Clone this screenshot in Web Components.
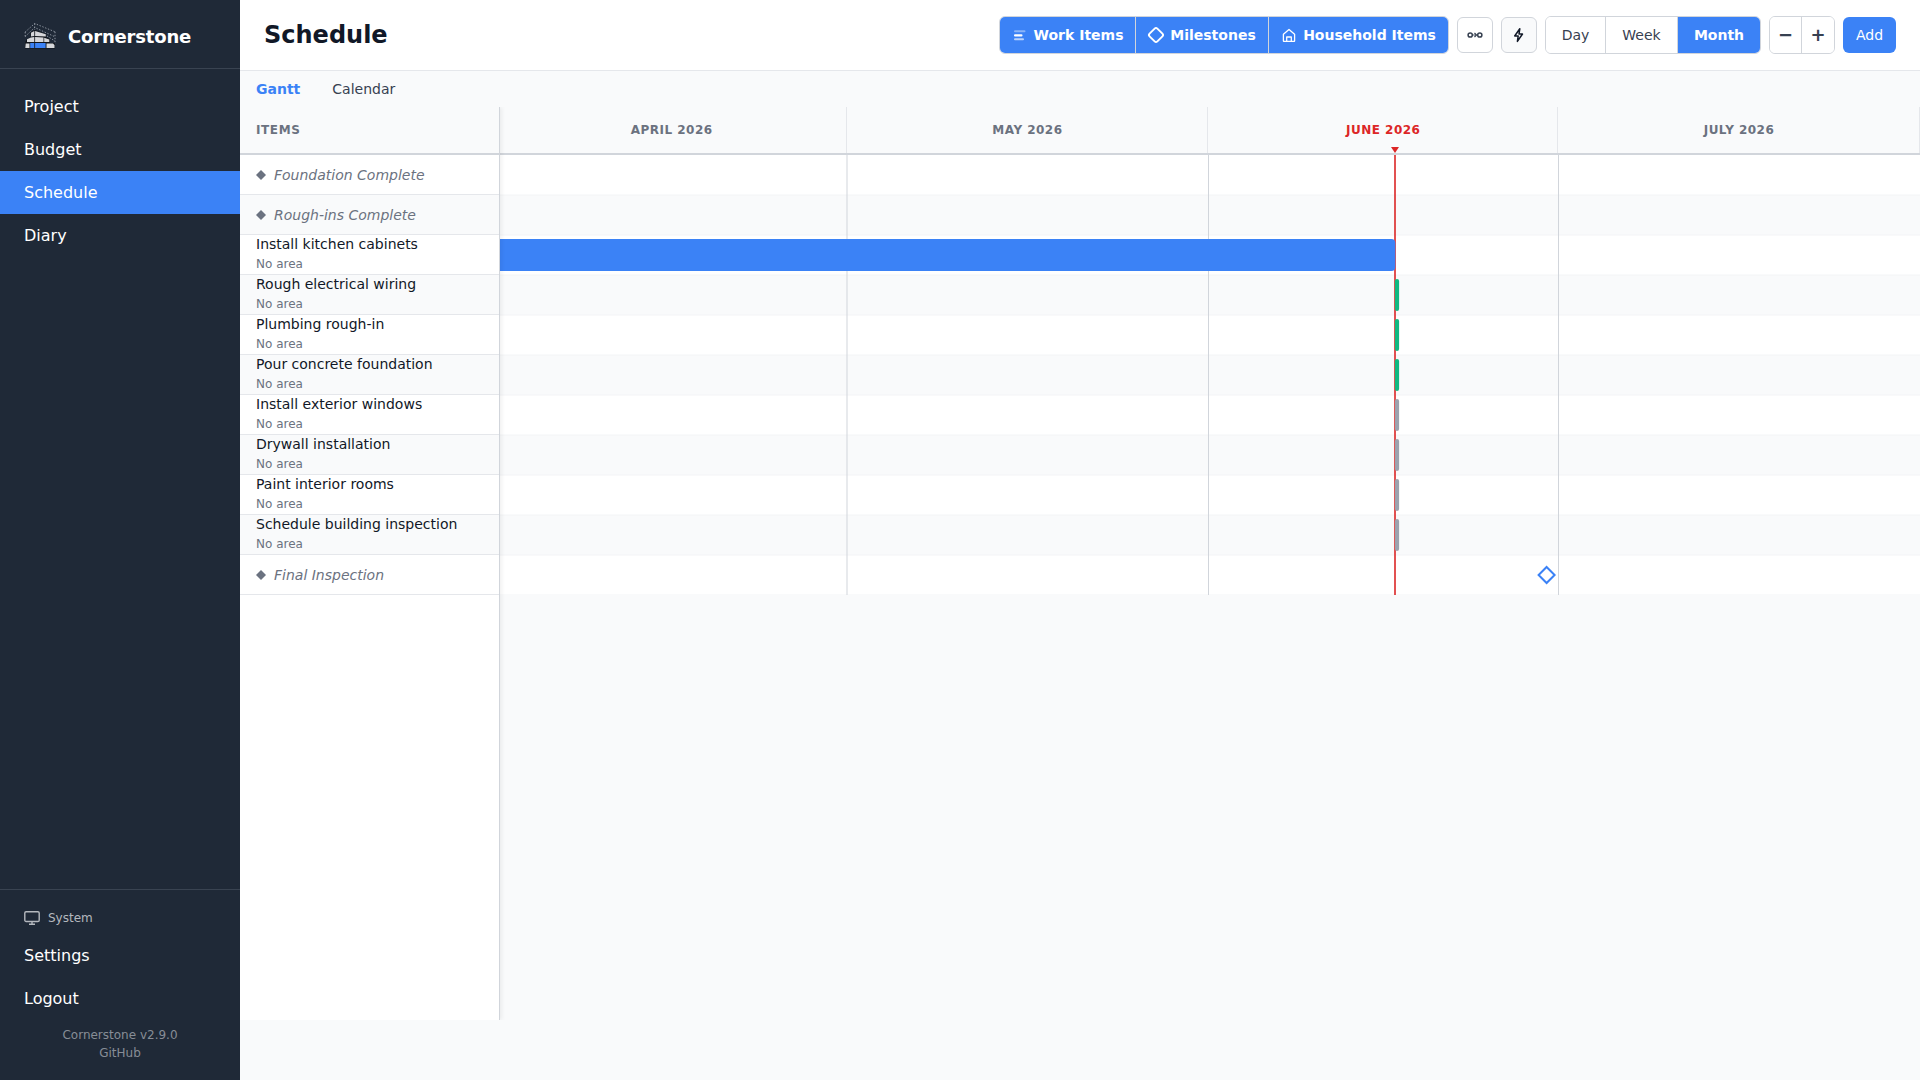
<!DOCTYPE html>
<html lang="en">
<head>
<meta charset="utf-8">
<title>Cornerstone - Schedule</title>
<style>
  html, body {
    margin: 0;
    height: 100%;
    background: #f9fafb;
    color: #111827;
    font-family: "DejaVu Sans", sans-serif;
    font-size: 14px;
    overflow: hidden;
  }
</style>
</head>
<body>
<schedule-app></schedule-app>

<script>
const DAY_WIDTH = 11.665;
const ROW_HEIGHT = 40;
const CHART_WIDTH = 1420;
// Left edge of April inside the visible part of the chart
const CHART_OFFSET = -3.3;
const TODAY_X = 895;

const MONTHS = [
  { label: 'April 2026', days: 30 },
  { label: 'May 2026', days: 31 },
  { label: 'June 2026', days: 30, current: true },
  { label: 'July 2026', days: 31 }
];

const ROWS = [
  { title: 'Foundation Complete', milestone: true },
  { title: 'Rough-ins Complete', milestone: true },
  { title: 'Install kitchen cabinets', start: -20, end: 895.3, color: '#3b82f6' },
  { title: 'Rough electrical wiring', start: 894.9, end: 899.1, color: '#10b981' },
  { title: 'Plumbing rough-in', start: 894.9, end: 899.1, color: '#10b981' },
  { title: 'Pour concrete foundation', start: 894.9, end: 899.1, color: '#10b981' },
  { title: 'Install exterior windows', start: 894.9, end: 899.1, color: '#9ca3af' },
  { title: 'Drywall installation', start: 894.9, end: 899.1, color: '#9ca3af' },
  { title: 'Paint interior rooms', start: 894.9, end: 899.1, color: '#9ca3af' },
  { title: 'Schedule building inspection', start: 894.9, end: 899.1, color: '#9ca3af' },
  { title: 'Final Inspection', milestone: true, at: 1046.6 }
];

const ICONS = {
  lines: `<svg width="20" height="20" viewBox="0 0 20 20" fill="currentColor">
    <rect x="4" y="5.3" width="11.5" height="2" rx="1" opacity=".4"/>
    <rect x="4" y="9.2" width="8.5" height="2.2" rx="1"/>
    <rect x="4" y="13.3" width="10" height="2" rx="1" opacity=".65"/></svg>`,
  diamond: `<svg width="20" height="20" viewBox="0 0 20 20" fill="none" stroke="currentColor" stroke-width="1.9">
    <rect x="4.5" y="4.5" width="11" height="11" rx="1.9" transform="rotate(45 10 10)"/></svg>`,
  house: `<svg width="20" height="20" viewBox="0 0 20 20" fill="none" stroke="currentColor" stroke-width="1.3" stroke-linejoin="round">
    <path d="M4.4 9.2 10 4.4l5.6 4.8v6.6a.6.6 0 0 1-.6.6H5a.6.6 0 0 1-.6-.6z"/>
    <path d="M7.7 16.4v-4.4h4.6v4.4"/></svg>`,
  link: `<svg width="20" height="20" viewBox="0 0 20 20" fill="none" stroke="currentColor" stroke-width="1.5">
    <circle cx="5.2" cy="10" r="2.1"/><circle cx="14.8" cy="10" r="2.1"/>
    <path d="M7.3 10h4" stroke-width=".9"/>
    <path d="M9.5 8l2 2-2 2" stroke-width="1.2"/></svg>`,
  bolt: `<svg width="20" height="20" viewBox="0 0 20 20" fill="none" stroke="currentColor" stroke-width="1.5" stroke-linejoin="round">
    <path d="M10.8 3.8 5.7 11h3.5l-.8 5.4L13.5 9H10z"/></svg>`,
  monitor: `<svg width="16" height="16" viewBox="0 0 16 16" fill="none" stroke="currentColor" stroke-width="1.4">
    <rect x=".8" y="1.8" width="14.4" height="9.7" rx="1.3"/>
    <path d="M8 11.5v2.7M5 14.3h6"/></svg>`,
  logo: `<svg width="32" height="32" viewBox="0 0 32 32">
    <g fill="none" stroke="#a9b0ba" stroke-width=".8" stroke-dasharray="1.4 1.6">
      <path d="M1.2 12 10.7 3.5 31 11.8"/>
      <path d="M1.2 16.5 10.7 7.5 31 16.8"/>
      <path d="M23 16 31 21"/>
      <path d="M10.7 3.5V10M31 11.8V24M1.2 12v6"/>
    </g>
    <path d="M6.5 12.5 10.7 10 22 14v3l4 2.5v3.5h5v5.5H1V23l1.5-3.5L6.5 17z" fill="#11151b"/>
    <g fill="#d6d7da">
      <path d="M7 12.7 10.3 11v5L7 16.5z"/>
      <path d="M11.1 11 21.800 14.3V16.6L11.1 16z"/>
      <path d="M3 19.2 6.8 17.4 10.3 17v5H3zM11.1 17 19.5 17.5V22H11.1zM20.2 17.7 25.3 19.5V22H20.2z"/>
      <path d="M1.7 23.5H5.5V28H1.3zM22.5 23.5H29l1.5 1.5v3h-8z"/>
    </g>
    <path d="M6.2 23h4.1v5H6.2zM11.1 23h10.5v5H11.1z" fill="#3b82f6"/></svg>`
};

class AppIcon extends HTMLElement {
  connectedCallback() {
    this.attachShadow({ mode: 'open' }).innerHTML = `
      <style>
        :host { display: inline-flex; flex: none; }
        svg { display: block; }
      </style>
      ${ICONS[this.getAttribute('name')]}
    `;
  }
}
customElements.define('app-icon', AppIcon);

class NavItem extends HTMLElement {
  connectedCallback() {
    this.attachShadow({ mode: 'open' }).innerHTML = `
      <style>
        :host {
          display: flex;
          align-items: center;
          height: 43px;
          padding-left: 24px;
          font-size: 16px;
          color: #fff;
        }
        :host([active]) { background: #3b82f6; }
      </style>
      <slot></slot>
    `;
  }
}
customElements.define('nav-item', NavItem);

class AppSidebar extends HTMLElement {
  connectedCallback() {
    this.attachShadow({ mode: 'open' }).innerHTML = `
      <style>
        :host {
          display: flex;
          flex-direction: column;
          width: 240px;
          flex: none;
          background: #1f2937;
          color: #fff;
        }
        .brand {
          display: flex;
          align-items: center;
          gap: 12px;
          height: 68px;
          padding: 4px 24px 0;
          box-sizing: border-box;
          font-size: 18px;
          font-weight: bold;
          letter-spacing: -.18px;
        }
        .rule { height: 1px; background: #394351; }
        nav { flex: 1; padding-top: 16px; }
        .section {
          display: flex;
          align-items: center;
          gap: 8px;
          height: 44px;
          padding: 6px 0 0 24px;
          margin-bottom: -6px;
          font-size: 12px;
          color: #b4b8be;
        }
        .footer {
          height: 60px;
          box-sizing: border-box;
          padding-top: 6px;
          font-size: 12px;
          line-height: 18px;
          text-align: center;
          color: #878d96;
        }
      </style>
      <div class="brand"><app-icon name="logo"></app-icon><span>Cornerstone</span></div>
      <div class="rule"></div>
      <nav>
        <nav-item>Project</nav-item>
        <nav-item>Budget</nav-item>
        <nav-item active>Schedule</nav-item>
        <nav-item>Diary</nav-item>
      </nav>
      <div class="rule"></div>
      <div class="section"><app-icon name="monitor"></app-icon><span>System</span></div>
      <nav-item>Settings</nav-item>
      <nav-item>Logout</nav-item>
      <div class="footer">
        <div>Cornerstone v2.9.0</div>
        <div>GitHub</div>
      </div>
    `;
  }
}
customElements.define('app-sidebar', AppSidebar);

class ButtonGroup extends HTMLElement {
  connectedCallback() {
    this.attachShadow({ mode: 'open' }).innerHTML = `
      <style>
        :host {
          display: flex;
          box-sizing: border-box;
          height: 38px;
          border: 1px solid #d1d5db;
          border-radius: 6px;
          overflow: hidden;
        }
        ::slotted(*:not(:last-child)) { border-right: 1px solid #d1d5db; }
      </style>
      <slot></slot>
    `;
  }
}
customElements.define('button-group', ButtonGroup);

class ToolButton extends HTMLElement {
  connectedCallback() {
    const width = this.getAttribute('width');
    this.attachShadow({ mode: 'open' }).innerHTML = `
      <style>
        :host {
          display: flex;
          align-items: center;
          justify-content: center;
          gap: 4px;
          box-sizing: border-box;
          width: ${width}px;
          color: #374151;
          background: #fff;
          white-space: nowrap;
        }
        :host([active]) {
          background: #3b82f6;
          color: #fff;
          font-weight: bold;
        }
        :host([filter]) { padding-right: 2px; }
        :host([boxed]) {
          height: 36px;
          border: 1px solid #d1d5db;
          border-radius: 6px;
        }
        :host([muted]) { background: #f9fafb; color: #111827; }
        :host([primary]) {
          height: 36px;
          border-radius: 6px;
          background: #3b82f6;
          color: #fff;
        }
        :host([sign]) {
          padding-bottom: 2px;
          font-size: 18px;
          font-weight: bold;
        }
      </style>
      <slot></slot>
    `;
  }
}
customElements.define('tool-button', ToolButton);

class PageHeader extends HTMLElement {
  connectedCallback() {
    this.attachShadow({ mode: 'open' }).innerHTML = `
      <style>
        :host {
          display: flex;
          align-items: center;
          justify-content: space-between;
          box-sizing: border-box;
          height: 71px;
          padding: 0 24px;
          background: #fff;
          border-bottom: 1px solid #e5e7eb;
        }
        h1 { margin: 0; font-size: 24px; }
        .tools { display: flex; align-items: center; gap: 8px; }
      </style>
      <h1>Schedule</h1>
      <div class="tools">
        <button-group>
          <tool-button active filter width="136"><app-icon name="lines"></app-icon>Work Items</tool-button>
          <tool-button active filter width="133"><app-icon name="diamond"></app-icon>Milestones</tool-button>
          <tool-button active filter width="179"><app-icon name="house"></app-icon>Household Items</tool-button>
        </button-group>
        <tool-button boxed width="36"><app-icon name="link"></app-icon></tool-button>
        <tool-button boxed muted width="36"><app-icon name="bolt"></app-icon></tool-button>
        <button-group>
          <tool-button width="60">Day</tool-button>
          <tool-button width="72">Week</tool-button>
          <tool-button active width="82">Month</tool-button>
        </button-group>
        <button-group>
          <tool-button sign width="32">−</tool-button>
          <tool-button sign width="32">+</tool-button>
        </button-group>
        <tool-button primary width="53">Add</tool-button>
      </div>
    `;
  }
}
customElements.define('page-header', PageHeader);

class ViewTabs extends HTMLElement {
  connectedCallback() {
    this.attachShadow({ mode: 'open' }).innerHTML = `
      <style>
        :host {
          display: flex;
          align-items: center;
          gap: 32px;
          height: 36px;
          padding-left: 16px;
          color: #374151;
        }
        .active { color: #3b82f6; font-weight: bold; }
      </style>
      <span class="active">Gantt</span>
      <span>Calendar</span>
    `;
  }
}
customElements.define('view-tabs', ViewTabs);

class GanttItems extends HTMLElement {
  row(item) {
    if (item.milestone) {
      return `
        <div class="row milestone">
          <svg width="10" height="10" viewBox="0 0 10 10"><path d="M5 0l5 5-5 5-5-5z" fill="#6b7280"/></svg>
          <em>${item.title}</em>
        </div>`;
    }
    return `
      <div class="row task">
        <div class="title">${item.title}</div>
        <div class="area">No area</div>
      </div>`;
  }

  connectedCallback() {
    this.attachShadow({ mode: 'open' }).innerHTML = `
      <style>
        :host {
          display: block;
          box-sizing: border-box;
          width: 260px;
          flex: none;
          position: relative;
          z-index: 1;
          background: #fff;
          border-right: 1px solid #d1d5db;
          box-shadow: 2px 0 4px rgba(0, 0, 0, .06);
        }
        .head {
          display: flex;
          align-items: center;
          height: 48px;
          padding: 0 16px;
          box-sizing: border-box;
          background: #f9fafb;
          border-bottom: 2px solid #d1d5db;
          color: #6b7280;
          font-size: 12px;
          font-weight: bold;
          letter-spacing: .6px;
        }
        .row {
          box-sizing: border-box;
          height: ${ROW_HEIGHT}px;
          padding: 0 16px;
          border-bottom: 1px solid #e5e7eb;
        }
        .row:nth-child(even) { background: #f9fafb; }
        .milestone {
          display: flex;
          align-items: center;
          gap: 8px;
          color: #6b7280;
        }
        .title { line-height: 18px; }
        .area { padding-top: 1px; font-size: 12px; line-height: 20px; color: #6b7280; }
      </style>
      <div class="head">ITEMS</div>
      <div class="rows">${ROWS.map(item => this.row(item)).join('')}</div>
    `;
  }
}
customElements.define('gantt-items', GanttItems);

class GanttTimeline extends HTMLElement {
  bands() {
    return ROWS.map((item, i) => `
      <rect x="0" y="${i * ROW_HEIGHT}" width="${CHART_WIDTH}" height="${ROW_HEIGHT}" fill="${i % 2 ? '#f9fafb' : '#fff'}"/>
    `).join('');
  }

  rowLines() {
    return ROWS.map((item, i) => {
      const y = (i + 1) * ROW_HEIGHT;
      return `<line x1="0" x2="${CHART_WIDTH}" y1="${y}" y2="${y}" stroke="#f3f4f6"/>`;
    }).join('');
  }

  monthLines() {
    let x = CHART_OFFSET;
    return MONTHS.slice(0, -1).map(({ days }) => {
      x += days * DAY_WIDTH;
      const px = Math.ceil(x * 2) / 2;
      return `<line x1="${px}" x2="${px}" y1="0" y2="${ROWS.length * ROW_HEIGHT}" stroke="#d1d5db"/>`;
    }).join('');
  }

  marks() {
    return ROWS.map((item, i) => {
      const y = i * ROW_HEIGHT;
      if (item.at) {
        return `<path d="M${item.at} ${y + 12}l8 8-8 8-8-8z" fill="#fff" stroke="#3b82f6" stroke-width="2"/>`;
      }
      if (item.milestone) {
        return '';
      }
      const width = item.end - item.start;
      return `<rect x="${item.start}" y="${y + 4}" width="${width}" height="32" rx="${Math.min(4, width / 2)}" fill="${item.color}"/>`;
    }).join('');
  }

  connectedCallback() {
    const height = ROWS.length * ROW_HEIGHT;
    this.attachShadow({ mode: 'open' }).innerHTML = `
      <style>
        :host { display: block; flex: 1; min-width: 0; overflow: hidden; }
        .months {
          display: flex;
          position: relative;
          box-sizing: border-box;
          height: 48px;
          border-bottom: 2px solid #d1d5db;
        }
        .month {
          display: flex;
          flex: none;
          align-items: center;
          justify-content: center;
          box-sizing: border-box;
          padding-left: 1px;
          border-right: 1px solid #e5e7eb;
          color: #6b7280;
          font-size: 12px;
          font-weight: bold;
          letter-spacing: .48px;
          text-transform: uppercase;
        }
        .month:first-child { margin-left: ${CHART_OFFSET}px; }
        .month.current { color: #dc2626; }
        .pin {
          position: absolute;
          left: ${TODAY_X - 4}px;
          bottom: 0;
          border: 4px solid transparent;
          border-top: 6px solid #dc2626;
          border-bottom: 0;
        }
        svg { display: block; }
      </style>
      <div class="months">
        ${MONTHS.map(({ label, days, current }) => `
          <div class="month ${current ? 'current' : ''}" style="width: ${days * DAY_WIDTH}px">${label}</div>
        `).join('')}
        <div class="pin"></div>
      </div>
      <svg width="${CHART_WIDTH}" height="${height}">
        ${this.bands()}
        ${this.rowLines()}
        ${this.monthLines()}
        <line x1="${TODAY_X}" x2="${TODAY_X}" y1="0" y2="${height}" stroke="#dc2626" stroke-width="2" opacity=".8"/>
        ${this.marks()}
      </svg>
    `;
  }
}
customElements.define('gantt-timeline', GanttTimeline);

class ScheduleApp extends HTMLElement {
  connectedCallback() {
    this.attachShadow({ mode: 'open' }).innerHTML = `
      <style>
        :host { display: flex; height: 100vh; }
        main {
          display: flex;
          flex-direction: column;
          flex: 1;
          min-width: 0;
          box-sizing: border-box;
          padding-bottom: 60px;
        }
        .chart { display: flex; flex: 1; min-height: 0; overflow: hidden; }
      </style>
      <app-sidebar></app-sidebar>
      <main>
        <page-header></page-header>
        <view-tabs></view-tabs>
        <div class="chart">
          <gantt-items></gantt-items>
          <gantt-timeline></gantt-timeline>
        </div>
      </main>
    `;
  }
}
customElements.define('schedule-app', ScheduleApp);
</script>
</body>
</html>
